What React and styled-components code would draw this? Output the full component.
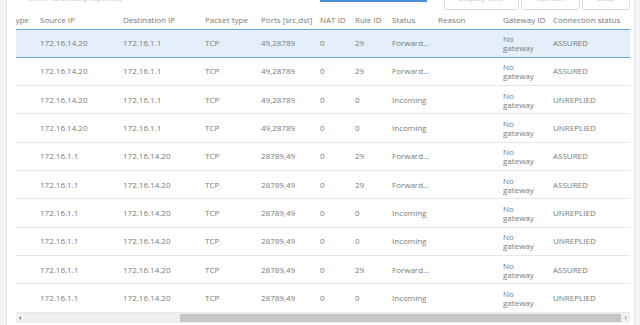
import React from "react";
import styled, { createGlobalStyle, css } from "styled-components";

const Global = createGlobalStyle`
  html, body { margin: 0; padding: 0; background: #f4f4f4; }
  #root { width: 640px; height: 325px; overflow: hidden; }
  * { box-sizing: border-box; }
`;

const Page = styled.div`
  width: 640px;
  height: 325px;
  background: #f4f4f4;
  display: flex;
  font-family: "Open Sans", "Liberation Sans", sans-serif;
`;

const Panel = styled.div`
  margin-left: 6px;
  margin-right: 5px;
  flex: 1;
  background: #ffffff;
  border-left: 1px solid #e3e3e3;
  border-right: 1px solid #e3e3e3;
  display: flex;
  flex-direction: column;
`;

const Toolbar = styled.div`
  height: 10px;
  overflow: hidden;
  display: flex;
  align-items: flex-end;
  padding: 0 4px 0 21px;
`;

const Caption = styled.span`
  font-size: 8px;
  line-height: 10px;
  color: #c3ceda;
  margin-bottom: 7px;
  width: 292px;
  white-space: nowrap;
`;

const TabMark = styled.div`
  align-self: flex-start;
  width: 107px;
  height: 2px;
  background: #4a8fd8;
`;

const Buttons = styled.div`
  margin-left: auto;
  display: flex;
  gap: 2px;
`;

const Button = styled.div`
  width: ${(p) => p.$w}px;
  height: 24px;
  border: 1px solid #dcdcdc;
  border-radius: 2px;
  font-size: 8px;
  color: #c8c8c8;
  display: flex;
  align-items: flex-end;
  justify-content: center;
  padding-bottom: 6px;
  line-height: 10px;
`;

const TableArea = styled.div`
  margin: 0 4px 0 9px;
  overflow: hidden;
  display: flex;
  flex-direction: column;
`;

const COLS = "29px 83px 82px 56px 59px 35px 37px 46px 65px 50px 77px";

const Grid = styled.div`
  width: 619px;
  margin-left: -5px;
  display: flex;
  flex-direction: column;
`;

const HeaderRow = styled.div`
  display: grid;
  grid-template-columns: ${COLS};
  height: 19.3px;
  align-items: center;
  font-size: 8px;
  color: #787878;
`;

const Row = styled.div`
  display: grid;
  grid-template-columns: ${COLS};
  height: 28.33px;
  align-items: center;
  font-size: 8px;
  color: #7a7a7a;
  border-bottom: 1px solid #e8e8e8;
  ${(p) =>
    p.$selected &&
    css`
      background: #e4eff9;
      border-top: 1px solid #6da6da;
      border-bottom: 1px solid #6da6da;
    `}
`;

const Cell = styled.div`
  white-space: nowrap;
  overflow: hidden;
  line-height: 10px;
`;

const WrapCell = styled.div`
  white-space: normal;
  width: 36px;
  line-height: 9px;
`;

const ScrollBar = styled.div`
  height: 10px;
  background: #f0f0f0;
  display: flex;
  align-items: center;
  padding: 0 3px;
`;

const Arrow = styled.span`
  width: 0;
  height: 0;
  border-top: 2px solid transparent;
  border-bottom: 2px solid transparent;
  ${(p) =>
    p.$dir === "left"
      ? css`border-right: 2px solid #7a7a7a;`
      : css`border-left: 2px solid #a8a8a8;`}
`;

const Track = styled.div`
  flex: 1;
  height: 100%;
  display: flex;
  align-items: center;
  padding-left: ${(p) => p.$start}px;
  padding-right: 4px;
`;

const Thumb = styled.div`
  flex: 1;
  height: 8px;
  background: #c6c6c6;
`;

const headers = [
  "Type",
  "Source IP",
  "Destination IP",
  "Packet type",
  "Ports [src,dst]",
  "NAT ID",
  "Rule ID",
  "Status",
  "Reason",
  "Gateway ID",
  "Connection status",
];

const A = ["172.16.14.20", "172.16.1.1", "TCP", "49,28789"];
const B = ["172.16.1.1", "172.16.14.20", "TCP", "28789,49"];
const FWD = ["0", "29", "Forward...", "ASSURED"];
const INC = ["0", "0", "Incoming", "UNREPLIED"];

const rows = [
  [A, FWD],
  [A, FWD],
  [A, INC],
  [A, INC],
  [B, FWD],
  [B, FWD],
  [B, INC],
  [B, INC],
  [B, FWD],
  [B, INC],
];

export default function App() {
  return (
    <>
      <Global />
      <Page>
        <Panel>
          <Toolbar>
            <Caption>Show selected properties</Caption>
            <TabMark />
            <Buttons>
              <Button $w={75}>Display filter</Button>
              <Button $w={59}>Refresh</Button>
              <Button $w={48}>Clear</Button>
            </Buttons>
          </Toolbar>
          <TableArea>
            <Grid>
              <HeaderRow>
                {headers.map((h) => (
                  <Cell key={h}>{h}</Cell>
                ))}
              </HeaderRow>
              {rows.map(([ip, st], i) => (
                <Row key={i} $selected={i === 0}>
                  <Cell />
                  <Cell>{ip[0]}</Cell>
                  <Cell>{ip[1]}</Cell>
                  <Cell>{ip[2]}</Cell>
                  <Cell>{ip[3]}</Cell>
                  <Cell>{st[0]}</Cell>
                  <Cell>{st[1]}</Cell>
                  <Cell>{st[2]}</Cell>
                  <Cell />
                  <WrapCell>No gateway</WrapCell>
                  <Cell>{st[3]}</Cell>
                </Row>
              ))}
            </Grid>
            <ScrollBar>
              <Arrow $dir="left" />
              <Track $start={159}>
                <Thumb />
              </Track>
              <Arrow $dir="right" />
            </ScrollBar>
          </TableArea>
        </Panel>
      </Page>
    </>
  );
}
